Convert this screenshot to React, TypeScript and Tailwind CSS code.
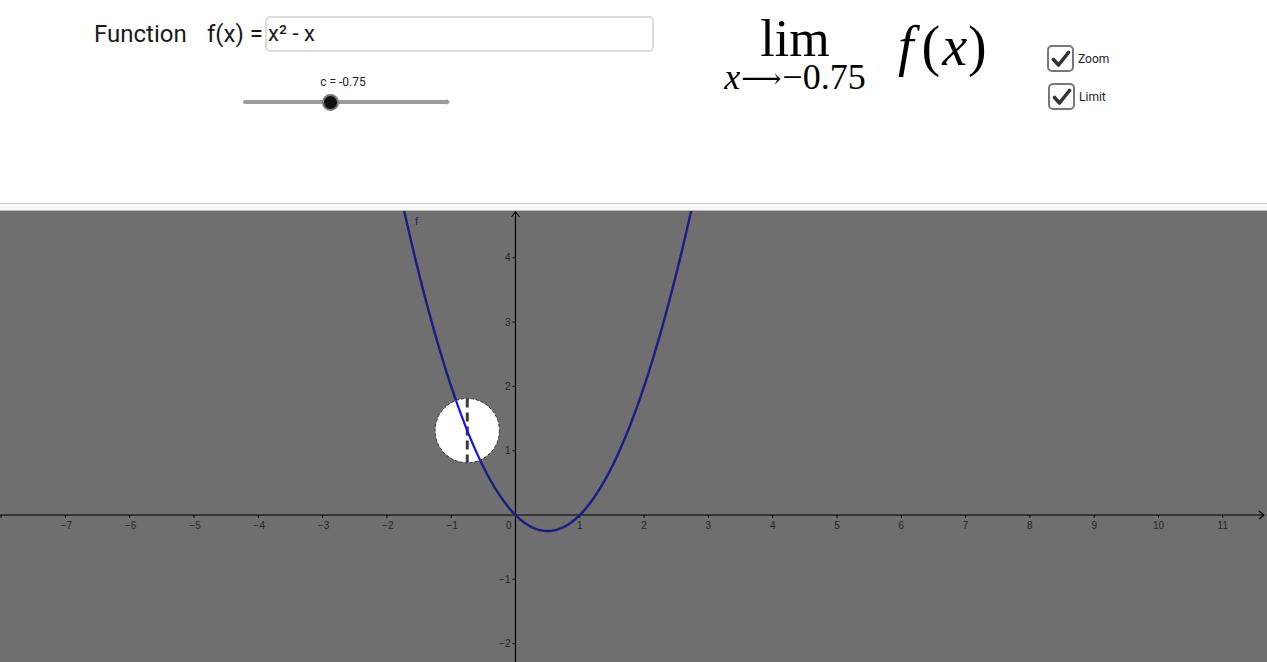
import React from "react";

const U = 64.3;
const X0 = 515.5;
const Y0 = 304;
const W = 1267;
const H = 451;
const C = -0.75;

const f = (x: number) => x * x - x;
const px = (x: number) => X0 + x * U;
const py = (y: number) => Y0 - y * U;

function curvePath(a: number, b: number, step = 0.01) {
  let d = "";
  for (let x = a; x <= b + 1e-9; x += step) {
    d += (d ? " L " : "M ") + px(x).toFixed(2) + " " + py(f(x)).toFixed(2);
  }
  return d;
}

function Graph() {
  const xs = [-8, -7, -6, -5, -4, -3, -2, -1, 1, 2, 3, 4, 5, 6, 7, 8, 9, 10, 11];
  const ys = [4, 3, 2, 1, -1, -2];
  const cx = px(C);
  const cy = py(f(C));
  const r = 0.5 * U;
  const d = curvePath(-1.9, 2.9);
  const lbl = (n: number) => (n < 0 ? "\u2212" + Math.abs(n) : String(n));
  return (
    <svg width={W} height={H} className="block" style={{ fontFamily: "'Liberation Sans', Arial, sans-serif" }}>
      <defs>
        <clipPath id="cc">
          <circle cx={cx} cy={cy} r={r} />
        </clipPath>
      </defs>
      <rect x={0} y={0} width={W} height={H} fill="#6f6f6f" />
      <line x1={0} y1={Y0} x2={1264} y2={Y0} stroke="#000" strokeWidth={1.2} />
      <polyline points={`1259,${Y0 - 4} 1264,${Y0} 1259,${Y0 + 4}`} fill="none" stroke="#000" strokeWidth={1.2} />
      <line x1={X0} y1={1} x2={X0} y2={H} stroke="#000" strokeWidth={1.2} />
      <polyline points={`${X0 - 4},6 ${X0},1 ${X0 + 4},6`} fill="none" stroke="#000" strokeWidth={1.2} />
      {xs.map((n) => (
        <g key={"x" + n}>
          <line x1={px(n)} y1={Y0} x2={px(n)} y2={Y0 + 3} stroke="#000" strokeWidth={1} />
          {n > -8 && (
            <text x={px(n) + (n < 0 ? 1 : 0)} y={Y0 + 14} fontSize={10} fill="#262626" textAnchor="middle">
              {lbl(n)}
            </text>
          )}
        </g>
      ))}
      <text x={X0 - 4} y={Y0 + 14} fontSize={10} fill="#262626" textAnchor="end">
        0
      </text>
      {ys.map((n) => (
        <g key={"y" + n}>
          <line x1={X0 - 3} y1={py(n)} x2={X0} y2={py(n)} stroke="#000" strokeWidth={1} />
          <text x={X0 - 5} y={py(n) + 3.5} fontSize={10} fill="#262626" textAnchor="end">
            {lbl(n)}
          </text>
        </g>
      ))}
      <path d={d} fill="none" stroke="#1c1c86" strokeWidth={2.4} />
      <text x={415} y={14} fontSize={11} fill="#23237a">
        f
      </text>
      <circle cx={cx} cy={cy} r={r} fill="#ffffff" stroke="#333" strokeWidth={1} strokeDasharray="3 2" />
      <line x1={cx} y1={cy - r} x2={cx} y2={cy + r} stroke="#3d3d3d" strokeWidth={3} strokeDasharray="9 5" />
      <path d={d} fill="none" stroke="#1414f5" strokeWidth={2.2} clipPath="url(#cc)" />
    </svg>
  );
}

function Check() {
  return (
    <div className="w-[27px] h-[27px] rounded-[5px] border-2 border-[#777] bg-white flex items-center justify-center">
      <svg width="20" height="18" viewBox="0 0 20 18">
        <path d="M2.5 9.5 L7.5 15 L17.5 2.5" fill="none" stroke="#333" strokeWidth={3.6} strokeLinecap="round" strokeLinejoin="round" />
      </svg>
    </div>
  );
}

export default function App() {
  return (
    <div className="w-[1267px] h-[662px] overflow-hidden bg-white" style={{ fontFamily: "Roboto, 'Liberation Sans', sans-serif" }}>
      <div className="h-[203px] flex items-start">
        <div className="ml-[94px] mt-[16px] w-[560px]">
          <div className="flex items-center h-[36px] text-[24px] text-[#1a1a1a]">
            <span className="w-[113px]">Function</span>
            <span className="w-[58px]">f(x) =</span>
            <div className="w-[389px] h-[36px] border-2 border-[#dcdcdc] rounded-[5px] flex items-center pl-[1px] text-[22px] leading-none">
              x² - x
            </div>
          </div>
          <div className="ml-[149px] w-[206px] mt-[23px]">
            <div className="text-[12px] leading-[14px] text-[#222] text-center pr-[6px]">c = -0.75</div>
            <div className="relative h-[16px] mt-[5px] flex items-center">
              <div className="w-full h-[4px] rounded-full bg-[#9b9b9b]" />
              <div className="absolute right-[-1px] top-[5px] w-0 h-0 border-y-[3px] border-y-transparent border-l-[4px] border-l-[#9b9b9b]" />
              <div className="absolute left-[79px] top-0 w-[17px] h-[17px] rounded-full bg-[#111] border-2 border-[#7a7a7a]" />
            </div>
          </div>
        </div>
        <div className="ml-[68px] w-[325px] flex items-start" style={{ fontFamily: "'Liberation Serif', 'Times New Roman', serif" }}>
          <div className="w-[146px] flex flex-col items-center text-black">
            <div className="text-[52px] leading-[44px] mt-[17px]">lim</div>
            <div className="text-[36px] leading-[30px] mt-[1px] whitespace-nowrap flex items-baseline">
              <i>x</i>
              <span className="inline-block w-[42px] text-center text-[28px] relative -top-[1px]" style={{ fontFamily: "'DejaVu Serif', 'DejaVu Sans', serif" }}>⟶</span>
              <span>−0.75</span>
            </div>
          </div>
          <div className="ml-[30px] mt-[18px] text-[56px] leading-[56px] whitespace-nowrap text-black">
            <i>f</i>
            <span className="ml-[8px]">(</span>
            <i className="ml-[2px]">x</i>
            <span className="ml-[1px]">)</span>
          </div>
        </div>
        <div className="mt-[45px] flex flex-col gap-[11px] text-[12px] text-[#222]">
          <div className="flex items-center gap-[4px]">
            <Check />
            <span>Zoom</span>
          </div>
          <div className="flex items-center gap-[4px] ml-[1px]">
            <Check />
            <span>Limit</span>
          </div>
        </div>
      </div>
      <div className="h-[8px] border-t border-b border-t-[#d4d4d4] border-b-[#bdbdbd] bg-[#f8f8f8]" />
      <Graph />
    </div>
  );
}
